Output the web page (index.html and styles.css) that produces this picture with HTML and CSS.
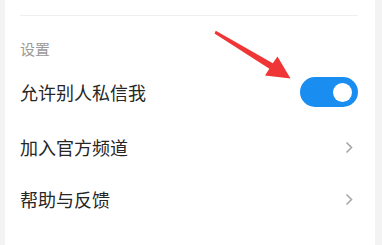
FILE: index.html
```html
<!DOCTYPE html>
<html lang="zh-CN">
<head>
<meta charset="utf-8">
<link rel="stylesheet" href="styles.css">
</head>
<body>
<div class="card">
  <div class="divider"></div>
  <div class="section-label">设置</div>
  <div class="row row-tall">
    <span class="row-text">允许别人私信我</span>
    <span class="toggle"><span class="knob"></span></span>
  </div>
  <div class="row">
    <span class="row-text">加入官方频道</span>
    <svg class="chev" width="8" height="13" viewBox="0 0 8 13"><path d="M1.5 1.5 L6.5 6.5 L1.5 11.5" fill="none" stroke="#a8a8a8" stroke-width="1.6"/></svg>
  </div>
  <div class="row">
    <span class="row-text">帮助与反馈</span>
    <svg class="chev" width="8" height="13" viewBox="0 0 8 13"><path d="M1.5 1.5 L6.5 6.5 L1.5 11.5" fill="none" stroke="#a8a8a8" stroke-width="1.6"/></svg>
  </div>
  <svg class="arrow" width="382" height="245" viewBox="0 0 382 245">
    <polygon points="214.5,33.5 269.4,68.8 265,75.5 290.5,78.5 277.5,56.5 272.8,63.2 215.8,30.8" fill="#ef3535"/>
  </svg>
</div>
</body>
</html>
```
FILE: styles.css
```css
html, body {
  margin: 0;
  padding: 0;
}
body {
  background: #f3f3f3;
  width: 382px;
  height: 245px;
  overflow: hidden;
  font-family: "Noto Sans CJK SC", "Noto Sans", sans-serif;
}
.card {
  position: relative;
  margin-left: 5px;
  width: 370px;
  height: 245px;
  background: #ffffff;
  padding: 15px 17px 0 15px;
  box-sizing: border-box;
}
.divider {
  height: 1px;
  background: #efefef;
}
.section-label {
  padding-top: 23px;
  height: 20px;
  line-height: 20px;
  font-size: 15px;
  color: #9a9a9a;
  margin-bottom: 4px;
}
.row {
  display: flex;
  align-items: center;
  justify-content: space-between;
  height: 52px;
}
.row-tall {
  height: 58px;
}
.row-text {
  font-size: 18px;
  color: #262626;
  line-height: 24px;
}
.toggle {
  display: flex;
  align-items: center;
  justify-content: flex-end;
  width: 58px;
  height: 30px;
  border-radius: 15px;
  background: #1a8ef0;
  padding-right: 6px;
  box-sizing: border-box;
}
.knob {
  width: 19px;
  height: 19px;
  border-radius: 50%;
  background: #ffffff;
}
.chev {
  margin-right: 5px;
}
.arrow {
  position: absolute;
  left: -5px;
  top: 0;
  pointer-events: none;
}
```
